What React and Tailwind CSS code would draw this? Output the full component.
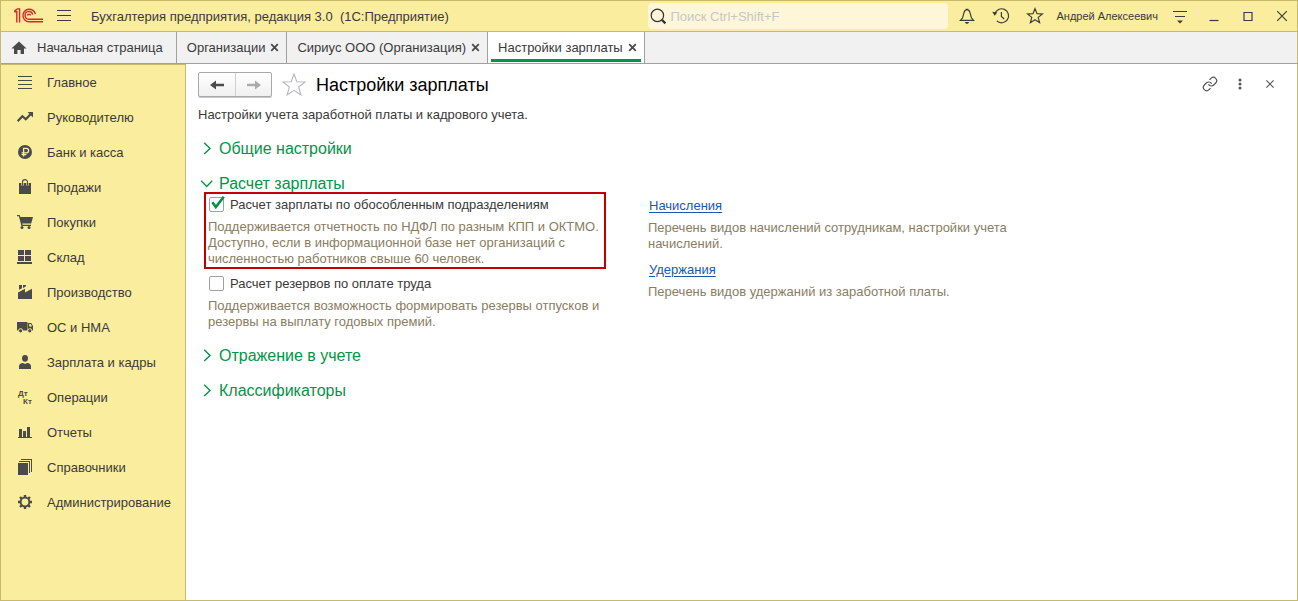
import React from "react";

function Logo() {
  return (
    <svg width="30" height="16" viewBox="0 0 30 16" fill="none" stroke="#d9262c" strokeWidth="1.4" role="img" aria-label="1С">
      <path d="M0.2 3.8H2.8V14.4" />
      <path d="M0.4 3.2L3.4 0.9H5.6V14.4" />
      <path d="M21.4 6.2A6.3 6.3 0 1 0 15 13.8H29" />
      <path d="M18.6 6.6A3.8 3.8 0 1 0 15 11.2H29" />
      <path d="M13.6 7.6A1.4 1.4 0 0 1 16.4 7.6" />
    </svg>
  );
}

const sidebarIcons = {
  main: <path d="M1 2h14v1H1zM1 6h14v1H1zM1 10h14v1H1zM1 14h14v1H1z" />,
  trend: (
    <>
      <path d="M0.6 12.2L5.4 7.2L8.8 10.2L14 4.8" fill="none" stroke="currentColor" strokeWidth="2.2" />
      <path d="M10.6 3H16V8.4z" />
    </>
  ),
  ruble: (
    <>
      <circle cx="8" cy="8" r="7" />
      <path d="M6.6 12.4V4.4H9.4A2.2 2.2 0 0 1 9.4 8.8H4.6M4.6 10.7H9.4" fill="none" stroke="#fbed9e" strokeWidth="1.3" />
    </>
  ),
  bag: (
    <>
      <path d="M2 4h12v11H2z" />
      <path d="M5.5 6.6V3A2.5 2.4 0 0 1 10.5 3V6.6" fill="none" stroke="#fbed9e" strokeWidth="2.4" />
      <path d="M5.5 6.6V3A2.5 2.4 0 0 1 10.5 3V6.6" fill="none" stroke="currentColor" strokeWidth="1.1" />
    </>
  ),
  cart: (
    <>
      <path d="M0 1h2.6l0.8 2H16l-1.8 6.4H5.2l0.4 1.4H14v1.2H4.4L1.9 2.2H0z" />
      <circle cx="5" cy="13.6" r="1.5" />
      <circle cx="12" cy="13.6" r="1.5" />
    </>
  ),
  warehouse: <path d="M1 1h6v5H1zM8 1h6v5H8zM1 7h6v5H1zM8 7h6v5H8zM0 13h15v2H0z" />,
  factory: (
    <path d="M2 1h3v3.2L2 5.8zM6 1h3.2L8.4 2.8L6 4zM1 15V8.6L8 4.8V8.6L15 4.8V15z" />
  ),
  truck: (
    <>
      <path d="M0 3h10.4v8.6H0zM10.8 4h3.4L16 7v4.6h-5.2z" />
      <path d="M12.2 5h1.6l1.2 2.4h-2.8z" fill="#fbed9e" />
      <g stroke="#fbed9e" strokeWidth="1">
        <circle cx="3.6" cy="11.8" r="2.1" />
        <circle cx="12.8" cy="11.8" r="2.1" />
      </g>
    </>
  ),
  person: (
    <>
      <ellipse cx="8" cy="4.3" rx="3" ry="3.4" />
      <path d="M2 15V12.4Q2 9.2 6 9L8 10L10 9Q14 9.2 14 12.4V15z" />
    </>
  ),
  debit: (
    <g fontFamily="Liberation Sans, Arial, sans-serif" fontSize="8" fontWeight="bold">
      <text x="1" y="7">Дт</text>
      <text x="6" y="15">Кт</text>
    </g>
  ),
  reports: <path d="M2 5h3v8H2zM6 7h3v6H6zM10 3h3v10h-3zM1 13h14v1H1z" />,
  books: <path d="M1 4h10v12H1zM2 2h11v12h-1V3H2zM4 0h11v13h-1V1H4z" />,
  gear: (
    <>
      <circle cx="8" cy="8" r="4.4" fill="none" stroke="currentColor" strokeWidth="2" />
      <path
        d="M8 1V4M8 12V15M1 8H4M12 8H15M3 3L5 5M11 11L13 13M13 3L11 5M5 11L3 13"
        stroke="currentColor"
        strokeWidth="2.4"
      />
    </>
  ),
};

const sections = [
  ["main", "Главное"],
  ["trend", "Руководителю"],
  ["ruble", "Банк и касса"],
  ["bag", "Продажи"],
  ["cart", "Покупки"],
  ["warehouse", "Склад"],
  ["factory", "Производство"],
  ["truck", "ОС и НМА"],
  ["person", "Зарплата и кадры"],
  ["debit", "Операции"],
  ["reports", "Отчеты"],
  ["books", "Справочники"],
  ["gear", "Администрирование"],
];

function BarButton({ label, children }) {
  return (
    <button type="button" aria-label={label} className="flex h-7 w-[30px] shrink-0 items-center justify-center">
      <svg width="18" height="18" viewBox="0 0 18 18" fill="none" stroke="#3c3c3c" strokeWidth="1.2">
        {children}
      </svg>
    </button>
  );
}

const starPath = "M9 1.6L11 6.7L16.4 7L12.2 10.4L13.6 15.7L9 12.7L4.4 15.7L5.8 10.4L1.6 7L7 6.7Z";

function TitleBar() {
  return (
    <header className="flex h-[31px] items-center border-b border-[#c9b96c] bg-[#fbed9e]">
      <div className="ml-[13px] flex">
        <Logo />
      </div>
      <button type="button" aria-label="Меню" className="ml-[13px] flex">
        <svg width="14" height="12" viewBox="0 0 14 12" fill="#3c3c3c">
          <path d="M0 0h14v1H0zM0 5h14v1H0zM0 10h14v1H0z" />
        </svg>
      </button>
      <h1 className="ml-5 whitespace-pre pt-[2px] text-[13px] leading-4">Бухгалтерия предприятия, редакция 3.0  (1С:Предприятие)</h1>
      <div className="ml-auto flex items-center gap-1">
        <label className="flex h-[26px] w-[300px] items-center rounded-sm bg-[#fdf6d8] pl-[2px]">
          <svg width="17" height="17" viewBox="0 0 17 17" fill="none" stroke="#333">
            <circle cx="7.4" cy="7.4" r="6.2" strokeWidth="1.2" />
            <path d="M11.9 11.9L15.4 15.4" strokeWidth="2.2" />
          </svg>
          <input
            type="search"
            aria-label="Поиск"
            placeholder="Поиск Ctrl+Shift+F"
            className="ml-[3px] min-w-0 flex-1 bg-transparent pt-[2px] text-[13px] leading-4 outline-none placeholder:text-[#c6c6ca]"
          />
        </label>
        <BarButton label="Оповещения">
          <path d="M7.6 2.4H10.4M2.4 13.4H15.6L13.4 10.8L12 5.6Q11.2 2.6 9 2.6Q6.8 2.6 6 5.6L4.6 10.8Z" />
          <path d="M6.6 15H11.4L9.8 16.8H8.2Z" fill="#3c3c3c" stroke="none" />
        </BarButton>
        <BarButton label="История">
          <path d="M2.8 7A7 7 0 1 1 4.8 13.9M9.4 5V9.4L12.2 12" />
          <path d="M0.2 4.8L5.4 5.6L2.6 8.8Z" fill="#3c3c3c" stroke="none" />
        </BarButton>
        <BarButton label="Избранное">
          <path d={starPath} />
        </BarButton>
        <a href="#user" className="ml-[2px] mr-[3px] whitespace-nowrap text-[11px] leading-4">
          Андрей Алексеевич
        </a>
        <BarButton label="Настройки панели">
          <path d="M2 4.5H16M4 9.5H14" />
          <path d="M6 13.4H12L9 16.6Z" fill="#3c3c3c" stroke="none" />
        </BarButton>
        <BarButton label="Свернуть">
          <path d="M4.5 13.5H13.5" />
        </BarButton>
        <BarButton label="Развернуть">
          <path d="M5 5.5H13V13.5H5Z" />
        </BarButton>
        <BarButton label="Закрыть окно">
          <path d="M4.2 4.2L13.8 13.8M13.8 4.2L4.2 13.8" />
        </BarButton>
      </div>
    </header>
  );
}

function Tab({ label, active }) {
  return (
    <div className={active ? "border-r border-[#a0a0a0] bg-white px-[3px]" : "border-r border-[#a0a0a0] px-[3px]"}>
      <div
        className={
          active
            ? "flex h-[30px] items-center gap-[5px] border-b-3 border-[#009646] pl-[7px] pr-[4px] pt-[4px]"
            : "flex h-[31px] items-center gap-[5px] pl-[7px] pr-[4px]"
        }
      >
        <a href="#tab" className="whitespace-nowrap">
          {label}
        </a>
        <button type="button" aria-label={"Закрыть: " + label}>
          <svg width="9" height="9" viewBox="0 0 9 9" stroke="#4a4a4a" strokeWidth="1.8">
            <path d="M1.2 1.2L7.8 7.8M7.8 1.2L1.2 7.8" />
          </svg>
        </button>
      </div>
    </div>
  );
}

function Tabs() {
  return (
    <nav className="flex h-8 border-b border-[#a0a0a0] bg-[#f1f1f1] text-[13px] leading-4">
      <a href="#home" className="flex items-center border-r border-[#a0a0a0] pl-[10px] pr-[13px]">
        <svg width="16" height="14" viewBox="0 0 16 14" fill="#4a4a4a">
          <path d="M8 0.4L15.6 7.4H13V13H9.6V9H6.4V13H3V7.4H0.4Z" />
        </svg>
        <span className="ml-[10px] whitespace-nowrap">Начальная страница</span>
      </a>
      <Tab label="Организации" />
      <Tab label="Сириус ООО (Организация)" />
      <Tab label="Настройки зарплаты" active />
    </nav>
  );
}

function Sidebar() {
  return (
    <nav className="w-[185px] shrink-0 border-r border-t border-[#c9b96c] bg-[#fbed9e]">
      {sections.map(([icon, label]) => (
        <a key={icon} href={"#" + icon} className="flex items-start gap-[14px] pb-2 pl-4 pt-[9px] text-[13px] leading-[18px]">
          <svg width="16" height="16" viewBox="0 0 16 16" fill="currentColor" className="shrink-0 text-[#4a4a4a]">
            {sidebarIcons[icon]}
          </svg>
          <span className="whitespace-nowrap">{label}</span>
        </a>
      ))}
    </nav>
  );
}

function SectionHeading({ label, open }) {
  return (
    <h3>
      <button type="button" aria-expanded={Boolean(open)} className="flex h-[18px] items-center gap-[5px] text-base text-[#009646]">
        <svg width="14" height="14" viewBox="0 0 14 14" fill="none" stroke="#009646" strokeWidth="1.4">
          {open ? <path d="M1.2 4.8L6.7 10.4L12.2 4.8" /> : <path d="M4.2 1.8L10 7.4L4.2 13" />}
        </svg>
        <span className="pt-[2px] leading-4">{label}</span>
      </button>
    </h3>
  );
}

function Option({ id, label, checked, children }) {
  return (
    <>
      <div className="flex h-5 items-center gap-[6px] pl-[1px]">
        <span className="relative flex">
          <input
            id={id}
            type="checkbox"
            defaultChecked={checked}
            className="peer size-[15px] appearance-none rounded-xs border border-[#a0a0a0] bg-white"
          />
          <svg
            width="16"
            height="16"
            viewBox="0 0 16 16"
            fill="none"
            stroke="#009646"
            strokeWidth="2.6"
            className="pointer-events-none absolute -top-px left-0 hidden peer-checked:block"
          >
            <path d="M3.4 6.2L6.8 11L14.8 0.8" />
          </svg>
        </span>
        <label htmlFor={id} className="pt-[2px]">
          {label}
        </label>
      </div>
      <p className="mt-[5px] text-[#8a7d62]">{children}</p>
    </>
  );
}

function Reference({ label, children }) {
  return (
    <div>
      <a href="#reference" className="ml-px text-[#1a56b8] underline underline-offset-2">
        {label}
      </a>
      <p className="mt-[6px] text-[#8a7d62]">{children}</p>
    </div>
  );
}

function Toolbar() {
  return (
    <div className="flex items-center">
      <div className="flex h-[25px] rounded-xs border border-[#a8a8a8] bg-linear-to-b from-white to-[#f0f0f0] shadow-[0_1px_0_#c8c8c8]">
        <button type="button" aria-label="Назад" className="flex w-[37px] items-center justify-center border-r border-[#d0d0d0]">
          <svg width="14" height="12" viewBox="0 0 14 12" fill="#4a4a4a">
            <path d="M0 6L6 1.4V4.8H14V7.2H6V10.6Z" />
          </svg>
        </button>
        <button type="button" aria-label="Вперед" className="flex w-[35px] items-center justify-center">
          <svg width="14" height="12" viewBox="0 0 14 12" fill="#ababab">
            <path d="M14 6L8 1.4V4.8H0V7.2H8V10.6Z" />
          </svg>
        </button>
      </div>
      <button type="button" aria-label="В избранное" className="ml-[10px] flex">
        <svg width="24" height="24" viewBox="0 0 24 24" fill="none" stroke="#b4b8bc" strokeWidth="1.1">
          <path d="M12 1L14.8 8.8L23.2 9L16.6 14L18.9 22L12 17.3L5.1 22L7.4 14L0.8 9L9.2 8.8Z" />
        </svg>
      </button>
      <h2 className="ml-[10px] text-lg leading-6 text-black">Настройки зарплаты</h2>
      <div className="ml-auto flex items-center gap-1 pb-[2px] pr-[2px]">
        <button type="button" aria-label="Ссылка" className="flex h-[22px] w-[26px] items-center justify-center">
          <svg width="16" height="16" viewBox="0 0 24 24" fill="none" stroke="#555" strokeWidth="1.8" strokeLinecap="round">
            <path d="M10 13a5 5 0 0 0 7.54.54l3-3a5 5 0 0 0-7.07-7.07l-1.72 1.71" />
            <path d="M14 11a5 5 0 0 0-7.54-.54l-3 3a5 5 0 0 0 7.07 7.07l1.71-1.71" />
          </svg>
        </button>
        <button type="button" aria-label="Еще" className="flex h-[22px] w-[26px] items-center justify-center">
          <svg width="4" height="12" viewBox="0 0 4 12" fill="#555">
            <circle cx="2" cy="2" r="1.5" />
            <circle cx="2" cy="6" r="1.5" />
            <circle cx="2" cy="10" r="1.5" />
          </svg>
        </button>
        <button type="button" aria-label="Закрыть" className="flex h-[22px] w-[26px] items-center justify-center">
          <svg width="10" height="10" viewBox="0 0 10 10" stroke="#555" strokeWidth="1.1">
            <path d="M1.4 1.4L8.6 8.6M8.6 1.4L1.4 8.6" />
          </svg>
        </button>
      </div>
    </div>
  );
}

export default function App() {
  return (
    <div className="flex min-h-screen flex-col border border-[#c9b96c] bg-white font-['Liberation_Sans',Arial,sans-serif] text-[#3a3a3a]">
      <TitleBar />
      <Tabs />
      <div className="flex flex-1">
        <Sidebar />
        <main className="min-w-0 flex-1 px-3 pt-2 text-[13px] leading-4">
          <Toolbar />
          <p className="mt-[10px]">Настройки учета заработной платы и кадрового учета.</p>
          <div className="mt-4 flex flex-col gap-[17px] pl-[2px]">
            <SectionHeading label="Общие настройки" />
            <section>
              <SectionHeading label="Расчет зарплаты" open />
              <div className="-mb-px flex gap-[42px] pl-1">
                <div className="max-w-[402px] flex-1">
                  <div className="border-2 border-[#c00000] px-[2px]">
                    <Option id="separate" label="Расчет зарплаты по обособленным подразделениям" checked>
                      Поддерживается отчетность по НДФЛ по разным КПП и ОКТМО. Доступно, если в информационной базе нет
                      организаций с численностью работников свыше 60 человек.
                    </Option>
                  </div>
                  <div className="mt-1 px-1">
                    <Option id="reserves" label="Расчет резервов по оплате труда">
                      Поддерживается возможность формировать резервы отпусков и резервы на выплату годовых премий.
                    </Option>
                  </div>
                </div>
                <div className="flex max-w-[400px] flex-1 flex-col gap-[10px] pt-[6px]">
                  <Reference label="Начисления">Перечень видов начислений сотрудникам, настройки учета начислений.</Reference>
                  <Reference label="Удержания">Перечень видов удержаний из заработной платы.</Reference>
                </div>
              </div>
            </section>
            <SectionHeading label="Отражение в учете" />
            <SectionHeading label="Классификаторы" />
          </div>
        </main>
      </div>
    </div>
  );
}
